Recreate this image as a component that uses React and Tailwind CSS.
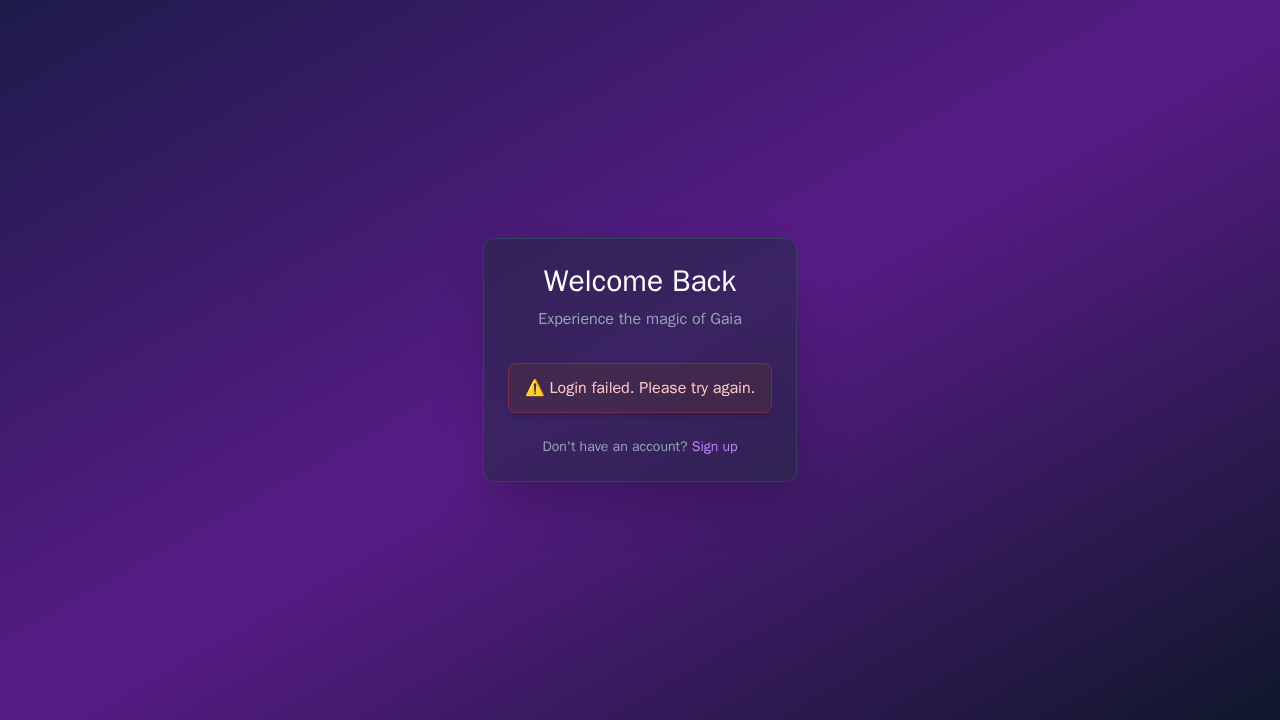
export default function App() {
  return (
    <div className="flex min-h-screen items-center justify-center bg-linear-to-br/srgb from-[#1e1b4b] via-[#581c87] to-[#0f172a] font-['WenQuanYi_Zen_Hei',sans-serif]">
      <main className="rounded-xl border border-[#22c55e]/20 bg-[#1e293b]/50 p-6 text-center shadow-2xl">
        <h1 className="mb-2 text-3xl font-normal text-white">Welcome Back</h1>
        <p className="mb-8 text-base text-[#94a3b8]">Experience the magic of Gaia</p>
        <div className="mb-6 rounded-lg border border-[#ef3050]/35 bg-[#563725]/30 px-4 py-3 text-base whitespace-nowrap text-[#fecaca] shadow-md">
          ⚠️ Login failed. Please try again.
        </div>
        <p className="text-sm text-[#94a3b8]">
          Don't have an account? <a className="text-[#c084fc]">Sign up</a>
        </p>
      </main>
    </div>
  );
}
